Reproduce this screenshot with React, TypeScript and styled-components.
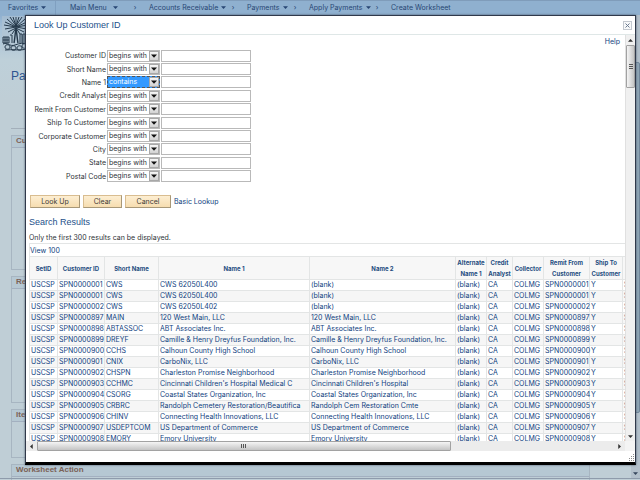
import React from "react";
import styled, { createGlobalStyle, css } from "styled-components";

const LINK = "#0f4180";
const INK = "#2e3338";
const HEADING_FONT = `"Liberation Sans", Arial, sans-serif`;

const GlobalStyle = createGlobalStyle`
  * { box-sizing: border-box; }
  body { margin: 0; font-family: Inter, "Liberation Sans", sans-serif; font-size: 7px; line-height: 11px; color: ${INK}; }
  a { color: inherit; text-decoration: none; }
  button, input, select { font: inherit; color: inherit; margin: 0; border-radius: 0; }
  svg { flex: none; }
`;

/* ---------- page behind the dialog ---------- */

const Page = styled.div`
  position: relative;
  display: flex;
  flex-direction: column;
  height: 100vh;
  min-height: 480px;
  overflow: hidden;
  background: linear-gradient(#8fb0d0 15px, #a9c3d8 30px, #bed0d9 60px, #bfced6 100px);
`;

const NavBar = styled.nav`
  flex: none;
  display: flex;
  align-items: center;
  height: 15px;
  padding: 1px 0 2px;
  background: #8fb0cf;
  border-top: 1px solid #7f9cba;
  color: #274673;
  white-space: nowrap;
`;

const NavItem = styled.a<{ $width: number; $divided?: boolean; $spaced?: boolean }>`
  display: flex;
  align-items: center;
  gap: ${(p) => (p.$spaced ? 6 : 3)}px;
  width: ${(p) => p.$width}px;
  height: 14px;
  padding-left: ${(p) => (p.$spaced ? 14 : 8)}px;
  ${(p) => p.$divided && css`border-right: 1px solid #7f9fc0;`}
`;

const NavArrow = styled.span`
  width: 12px;
  text-align: center;
`;

const Main = styled.main`
  flex: 1;
  display: flex;
  min-height: 0;
`;

const PageBody = styled.div`
  flex: 1;
  min-width: 0;
  display: flex;
  flex-direction: column;
`;

const LogoBox = styled.div`
  width: 28px;
  height: 36px;
  padding: 1px 0 0 2px;
`;

const PageTitle = styled.h1`
  margin: 18px 41px 6px 11px;
  padding-bottom: 45px;
  border-bottom: 1px solid #a3afba;
  font-family: ${HEADING_FONT};
  font-size: 12px;
  line-height: 14px;
  font-weight: 400;
  color: #2d5590;
`;

const Group = styled.section<{ $height: number }>`
  flex: none;
  margin: 0 41px 6px 11px;
  height: ${(p) => p.$height}px;
  border: 1px solid #a7b5c1;
`;

const GroupTitle = styled.h2`
  margin: 0;
  padding-left: 4px;
  height: 12px;
  font-family: ${HEADING_FONT};
  font-size: 8px;
  line-height: 10px;
  font-weight: 700;
  color: #7b6257;
  background: #b6c8d3;
  border-bottom: 1px solid #a3b0c0;
`;

const PageScroll = styled.div`
  flex: none;
  width: 9px;
  display: flex;
  flex-direction: column;
  align-items: center;
  justify-content: space-between;
  padding-bottom: 2px;
  background: #b3c0cb;
  color: #36475c;
`;

const PageThumb = styled.div`
  width: 9px;
  height: 351px;
  margin-top: 47px;
  border: 1px solid #71869a;
  border-radius: 2px;
  background: #8fa5b5;
`;

const StatusLine = styled.div`
  flex: none;
  display: flex;
  gap: 10px;
  height: 2px;
  padding: 1px 0 0 27px;
  border-top: 1px solid #8e9bab;
`;

const ButtonEdge = styled.span`
  width: 50px;
  height: 1px;
  background: #8b8e90;
`;

/* ---------- dialog ---------- */

const Dialog = styled.div`
  position: absolute;
  inset: 15px 4px 15px 25px;
  display: flex;
  flex-direction: column;
  background: #fff;
  border: 1px solid #30394a;
  border-bottom: 3px solid #000;
  box-shadow: 0 0 2px #4a5667;
`;

const DialogHeader = styled.header`
  flex: none;
  display: flex;
  align-items: center;
  justify-content: space-between;
  height: 19px;
  padding: 0 3px 0 8px;
  border-bottom: 1px solid #dfe7e7;
`;

const DialogTitle = styled.h2`
  margin: 0;
  font-family: ${HEADING_FONT};
  font-size: 9px;
  line-height: 12px;
  font-weight: 400;
  color: #24508a;
`;

const CloseButton = styled.button`
  display: flex;
  align-items: center;
  justify-content: center;
  width: 9px;
  height: 9px;
  padding: 0;
  background: #f7f8f9;
  border: 1px solid #c3c8cf;
`;

const DialogBody = styled.div`
  flex: 1;
  display: flex;
  min-height: 0;
`;

const Content = styled.div`
  position: relative;
  flex: 1;
  min-width: 0;
  overflow: hidden;
  padding-top: 14px;
`;

const HelpLink = styled.a`
  position: absolute;
  top: 1px;
  right: 5px;
  color: ${LINK};
`;

const Form = styled.form``;

const Fields = styled.div`
  display: grid;
  grid-auto-rows: 1fr;
  height: 134px;
`;

const FieldRow = styled.div`
  display: grid;
  grid-template-columns: 80px 53px 90px;
  column-gap: 1px;
  align-items: center;
`;

const FieldLabel = styled.label`
  text-align: right;
  white-space: nowrap;
`;

const SelectBox = styled.div`
  position: relative;
  height: 12px;
`;

const Select = styled.select<{ $active?: boolean }>`
  appearance: none;
  display: block;
  width: 53px;
  height: 12px;
  padding: 0 0 0 1px;
  line-height: 10px;
  border: 1px solid #b9b9b9;
  outline: none;
  background: #fff;
  ${(p) => p.$active && css`
    border: 1px dashed #555;
    background: #3399ff;
    color: #fff;
  `}
`;

const SelectArrow = styled.span`
  position: absolute;
  top: 1px;
  right: 1px;
  display: flex;
  align-items: center;
  justify-content: center;
  width: 10px;
  height: 10px;
  border: 1px solid #a8a8a8;
  background: linear-gradient(#f6f6f6, #d2d2d2);
  color: #111;
  pointer-events: none;
`;

const TextInput = styled.input`
  width: 100%;
  height: 12px;
  padding: 0 2px;
  border: 1px solid #b9b9b9;
  background: #fff;
`;

const Actions = styled.div`
  display: flex;
  align-items: center;
  gap: 3px;
  margin: 12px 0 0 4px;
`;

const ActionButton = styled.button<{ $width: number }>`
  width: ${(p) => p.$width}px;
  height: 13px;
  padding: 0;
  line-height: 11px;
  color: #3d3a36;
  background: linear-gradient(#fdeed2, #f6ddb0);
  border: 1px solid #d9bd90;
  border-right-color: #a89878;
  border-bottom-color: #a89878;
`;

const TextLink = styled.a`
  color: ${LINK};
  white-space: nowrap;
`;

const ResultsTitle = styled.h3`
  margin: 8px 0 0 3px;
  font-family: ${HEADING_FONT};
  font-size: 9px;
  line-height: 12px;
  font-weight: 400;
  color: #24508a;
`;

const ResultsNote = styled.p`
  margin: 4px 0 0 3px;
`;

const GridBar = styled.div`
  display: flex;
  align-items: center;
  height: 13px;
  margin-left: 3px;
  border-top: 1px solid #e3e5e5;
  border-left: 1px solid #e3e5e5;
`;

const Table = styled.table`
  table-layout: fixed;
  width: 660px;
  margin-left: 3px;
  border-spacing: 0;
  border-left: 1px solid #e3e5e5;
`;

const Col = styled.col<{ $width: number }>`
  width: ${(p) => p.$width}px;
`;

const Th = styled.th`
  height: 24px;
  padding: 0;
  font-size: 6px;
  line-height: 11px;
  font-weight: 700;
  color: #244c80;
  background: #f7f7f7;
  border: solid #e3e5e5;
  border-width: 1px 1px 1px 0;
`;

const Row = styled.tr`
  color: ${LINK};
  background: #fff;
  &:nth-child(even) { background: #f6f6f6; }
`;

const Td = styled.td`
  height: 11px;
  padding: 0 0 0 1px;
  line-height: 10px;
  white-space: nowrap;
  border: solid #e3e5e5;
  border-width: 0 1px 1px 0;
`;

const VScroll = styled.div`
  flex: none;
  display: flex;
  flex-direction: column;
  align-items: center;
  width: 10px;
  background: #f0f0f0;
  border-left: 1px solid #e0e0e0;
  color: #333;
`;

const HScroll = styled.div`
  flex: none;
  display: flex;
  align-items: center;
  height: 10px;
  background: #ececec;
  color: #333;
`;

const ScrollEnd = styled.span`
  flex: none;
  display: flex;
  align-items: center;
  justify-content: center;
  width: 11px;
  height: 10px;
`;

const Thumb = styled.div<{ $vertical?: boolean }>`
  display: flex;
  align-items: center;
  justify-content: center;
  border: 1px solid #a2a2a2;
  border-radius: 1px;
  color: #555;
  ${(p) => p.$vertical
    ? css`width: 9px; height: 43px; background: linear-gradient(90deg, #f5f5f5, #c4c4c4);`
    : css`width: 68%; height: 10px; background: linear-gradient(#f5f5f5, #c4c4c4);`}
`;

const ScrollSpacer = styled.div`
  flex: 1;
`;

const ScrollCorner = styled.div`
  width: 10px;
  height: 10px;
  background: #f4f4f4;
`;

const DialogFooter = styled.footer`
  flex: none;
  display: flex;
  align-items: flex-end;
  justify-content: flex-end;
  height: 11px;
  padding: 0 0 1px;
`;

/* ---------- drawings ---------- */

const turn = { down: 0, left: 90, up: 180, right: 270 };

function Arrow({ dir = "down", size = 5 }: { dir?: keyof typeof turn; size?: number }) {
  return (
    <svg width={size} height={size} viewBox="0 0 6 6" aria-hidden="true">
      <path d="M0 1.5h6L3 4.8z" fill="currentColor" transform={`rotate(${turn[dir]} 3 3)`} />
    </svg>
  );
}

function Grip({ vertical }: { vertical?: boolean }) {
  return (
    <svg width="6" height="6" viewBox="0 0 6 6" aria-hidden="true">
      <path d={vertical ? "M1 .5h4M1 2.5h4M1 4.5h4" : "M.5 1v4M2.5 1v4M4.5 1v4"} stroke="currentColor" />
    </svg>
  );
}

function PalmLogo() {
  return (
    <svg width="26" height="35" viewBox="0 0 26 35" fill="none" stroke="#24384a" aria-hidden="true">
      <path d="M0 0h26v35H0z" fill="#b5c6d2" fillOpacity=".5" stroke="none" />
      <path d="M14 10V1M14 10 11 1M14 10 17 1M14 10 8 1M14 10 20 1M14 11 5 3M14 11 23 3M14 11 3 6M14 11 25 6M14 11 2 9M14 11 26 9M14 11 3 13M14 11 25 13M14 12 6 16M14 12 22 16M14 12 10 18M14 12 18 18" />
      <path d="M14 12c-1 6-1 10-2 15M14 12c1 6 1 10 2 15" strokeWidth="1.4" />
      <path d="M1 21h6v6H1zM3 21v6M5 21v6M8 19h2v8M18 27v-9h2v9M21 27v-9h2v9M24 18v9M1 24h6" />
      <path d="M1 28c4-2 7 3 12 1s8-2 12-1M3 31c0-3 5-3 5 0s-5 3-5 0M9 32c0-3 5-3 5 0s-5 3-5 0M15 32c0-3 5-3 5 0s-5 3-5 0M20 30c0-3 5-3 5 0s-5 3-5 0M3 34c7-1 15 1 22-1" />
    </svg>
  );
}

/* ---------- data ---------- */

const fields = [
  "Customer ID", "Short Name", "Name 1", "Credit Analyst", "Remit From Customer",
  "Ship To Customer", "Corporate Customer", "City", "State", "Postal Code",
];

const columns: [string, number][] = [
  ["SetID", 28], ["Customer ID", 47], ["Short Name", 54], ["Name 1", 151], ["Name 2", 146],
  ["Alternate Name 1", 31], ["Credit Analyst", 26], ["Collector", 31],
  ["Remit From Customer", 46], ["Ship To Customer", 33], ["", 66],
];

const rows: [string, string, string, string][] = [
  ["SPN0000001", "CWS", "CWS 62050L400", "(blank)"],
  ["SPN0000001", "CWS", "CWS 62050L400", "(blank)"],
  ["SPN0000002", "CWS", "CWS 62050L402", "(blank)"],
  ["SPN0000897", "MAIN", "120 West Main, LLC", "120 West Main, LLC"],
  ["SPN0000898", "ABTASSOC", "ABT Associates Inc.", "ABT Associates Inc."],
  ["SPN0000899", "DREYF", "Camille & Henry Dreyfus Foundation, Inc.", "Camille & Henry Dreyfus Foundation, Inc."],
  ["SPN0000900", "CCHS", "Calhoun County High School", "Calhoun County High School"],
  ["SPN0000901", "CNIX", "CarboNix, LLC", "CarboNix, LLC"],
  ["SPN0000902", "CHSPN", "Charleston Promise Neighborhood", "Charleston Promise Neighborhood"],
  ["SPN0000903", "CCHMC", "Cincinnati Children's Hospital Medical C", "Cincinnati Children's Hospital"],
  ["SPN0000904", "CSORG", "Coastal States Organization, Inc", "Coastal States Organization, Inc"],
  ["SPN0000905", "CRBRC", "Randolph Cemetery Restoration/Beautifica", "Randolph Cem Restoration Cmte"],
  ["SPN0000906", "CHINV", "Connecting Health Innovations, LLC", "Connecting Health Innovations, LLC"],
  ["SPN0000907", "USDEPTCOM", "US Department of Commerce", "US Department of Commerce"],
  ["SPN0000908", "EMORY", "Emory University", "Emory University"],
];

export default function App() {
  return (
    <Page>
      <GlobalStyle />
      <NavBar aria-label="Breadcrumb">
        <NavItem href="#" $width={56} $divided>Favorites <Arrow /></NavItem>
        <NavItem href="#" $width={73} $spaced>Main Menu <Arrow /></NavItem>
        <NavArrow>›</NavArrow>
        <NavItem href="#" $width={86}>Accounts Receivable <Arrow /></NavItem>
        <NavArrow>›</NavArrow>
        <NavItem href="#" $width={50}>Payments <Arrow /></NavItem>
        <NavArrow>›</NavArrow>
        <NavItem href="#" $width={70}>Apply Payments <Arrow /></NavItem>
        <NavArrow>›</NavArrow>
        <NavItem href="#" $width={80}>Create Worksheet</NavItem>
      </NavBar>
      <Main>
        <PageBody>
          <LogoBox><PalmLogo /></LogoBox>
          <PageTitle>Pa</PageTitle>
          <Group $height={135}><GroupTitle>Cu</GroupTitle></Group>
          <Group $height={127}><GroupTitle>Re</GroupTitle></Group>
          <Group $height={49}><GroupTitle>Ite</GroupTitle></Group>
          <Group $height={49}><GroupTitle>Worksheet Action</GroupTitle></Group>
        </PageBody>
        <PageScroll>
          <PageThumb />
          <Arrow />
        </PageScroll>
      </Main>
      <StatusLine>
        <ButtonEdge />
        <ButtonEdge />
      </StatusLine>

      <Dialog role="dialog" aria-labelledby="dialog-title">
        <DialogHeader>
          <DialogTitle id="dialog-title">Look Up Customer ID</DialogTitle>
          <CloseButton type="button" aria-label="Close">
            <svg width="5" height="5" viewBox="0 0 5 5" aria-hidden="true">
              <path d="M.5.5l4 4M4.5.5l-4 4" stroke="#6b7a90" />
            </svg>
          </CloseButton>
        </DialogHeader>
        <DialogBody>
          <Content>
            <HelpLink href="#">Help</HelpLink>
            <Form>
              <Fields>
                {fields.map((name, i) => {
                  const active = name === "Name 1";
                  return (
                    <FieldRow key={name}>
                      <FieldLabel htmlFor={`f${i}`}>{name}</FieldLabel>
                      <SelectBox>
                        <Select $active={active} aria-label={`${name} operator`} defaultValue={active ? "contains" : "begins with"}>
                          <option>begins with</option>
                          <option>contains</option>
                        </Select>
                        <SelectArrow><Arrow size={6} /></SelectArrow>
                      </SelectBox>
                      <TextInput id={`f${i}`} type="text" />
                    </FieldRow>
                  );
                })}
              </Fields>
              <Actions>
                <ActionButton type="button" $width={50}>Look Up</ActionButton>
                <ActionButton type="button" $width={39}>Clear</ActionButton>
                <ActionButton type="button" $width={46}>Cancel</ActionButton>
                <TextLink href="#">Basic Lookup</TextLink>
              </Actions>
            </Form>
            <ResultsTitle>Search Results</ResultsTitle>
            <ResultsNote>Only the first 300 results can be displayed.</ResultsNote>
            <GridBar><TextLink href="#">View 100</TextLink></GridBar>
            <Table>
              <colgroup>{columns.map(([name, width]) => <Col key={name} $width={width} />)}</colgroup>
              <thead>
                <tr>{columns.map(([name]) => <Th key={name} scope="col">{name}</Th>)}</tr>
              </thead>
              <tbody>
                {rows.map(([id, short, name1, name2], i) => (
                  <Row key={i}>
                    {["USCSP", id, short, name1, name2, "(blank)", "CA", "COLMG", id, "Y", "S"].map((text, c) => (
                      <Td key={c}><a href="#">{text}</a></Td>
                    ))}
                  </Row>
                ))}
              </tbody>
            </Table>
          </Content>
          <VScroll>
            <ScrollEnd><Arrow dir="up" /></ScrollEnd>
            <Thumb $vertical><Grip vertical /></Thumb>
            <ScrollSpacer />
            <ScrollEnd><Arrow /></ScrollEnd>
          </VScroll>
        </DialogBody>
        <HScroll>
          <ScrollEnd><Arrow dir="left" /></ScrollEnd>
          <Thumb><Grip /></Thumb>
          <ScrollSpacer />
          <ScrollEnd><Arrow dir="right" /></ScrollEnd>
          <ScrollCorner />
        </HScroll>
        <DialogFooter>
          <svg width="7" height="7" viewBox="0 0 7 7" fill="#8c8c8c" aria-hidden="true">
            <path d="M5 0h1v1H5zM3 2h1v1H3zM5 2h1v1H5zM1 4h1v1H1zM3 4h1v1H3zM5 4h1v1H5zM1 6h1v1H1zM3 6h1v1H3zM5 6h1v1H5z" />
          </svg>
        </DialogFooter>
      </Dialog>
    </Page>
  );
}
